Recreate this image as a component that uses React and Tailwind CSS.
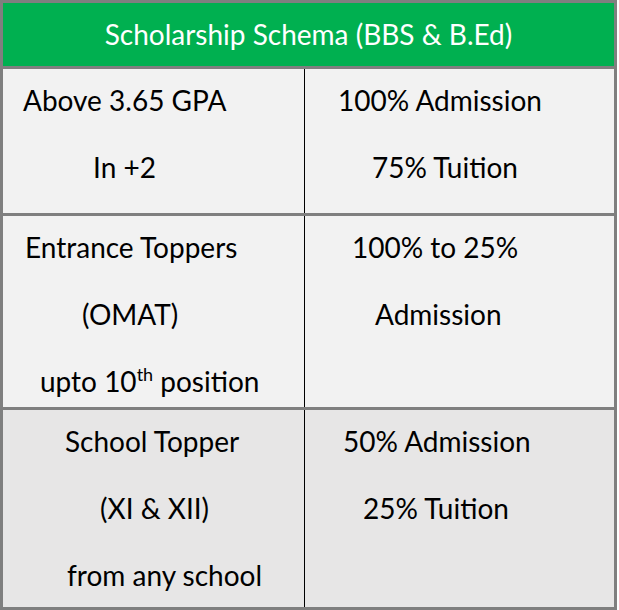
import React from 'react';

const rows = [
    {
        bg: 'bg-[#f2f2f2]',
        height: 'h-[144px]',
        left: [
            { text: 'Above 3.65 GPA', indent: 'ml-[20px]' },
            { text: 'In +2', indent: 'ml-[90px]' },
        ],
        right: [
            { text: '100% Admission', indent: 'ml-[33px]' },
            { text: '75% Tuition', indent: 'ml-[67px]' },
        ],
    },
    {
        bg: 'bg-[#f2f2f2]',
        height: 'h-[191px]',
        left: [
            { text: 'Entrance Toppers', indent: 'ml-[22px]' },
            { text: '(OMAT)', indent: 'ml-[79px]' },
            { text: 'upto 10', sup: 'th', after: ' position', indent: 'ml-[37px]' },
        ],
        right: [
            { text: '100% to 25%', indent: 'ml-[47px]' },
            { text: 'Admission', indent: 'ml-[70px]' },
        ],
    },
    {
        bg: 'bg-[#e7e6e6]',
        height: 'h-[197px]',
        left: [
            { text: 'School Topper', indent: 'ml-[62px]' },
            { text: '(XI & XII)', indent: 'ml-[97px]' },
            { text: 'from any school', indent: 'ml-[64px]' },
        ],
        right: [
            { text: '50% Admission', indent: 'ml-[38px]' },
            { text: '25% Tuition', indent: 'ml-[58px]' },
        ],
    },
];

const CellLines = ({ lines }) => (
    <div className="flex flex-col gap-[35px] pt-[15px]">
        {lines.map((line) => (
            <div key={line.text} className={`${line.indent} leading-[32px] whitespace-pre`}>
                {line.text}
                {line.sup && <span className="text-[18px] leading-none relative -top-[11px]">{line.sup}</span>}
                {line.after}
            </div>
        ))}
    </div>
);

export default function App() {
    return (
        <div className="w-[619px] h-[610px] bg-white">
            <div
                className="w-[617px] border-[3px] border-[#7f7f7f] text-[28px] text-black"
                style={{ fontFamily: 'Lato, "Open Sans", sans-serif' }}
            >
                {/* Header */}
                <div className="h-[66px] bg-[#00b050] border-b-[3px] border-[#7f7f7f] flex justify-center pt-[14px]">
                    <span className="text-white text-[28px] leading-[35px]">Scholarship Schema (BBS &amp; B.Ed)</span>
                </div>

                {rows.map((row, i) => (
                    <div
                        key={i}
                        className={`flex ${row.bg} ${row.height} ${i < rows.length - 1 ? 'border-b-[3px] border-[#7f7f7f] box-content' : ''}`}
                    >
                        <div className="w-[302px] border-r border-black">
                            <CellLines lines={row.left} />
                        </div>
                        <div className="flex-1">
                            <CellLines lines={row.right} />
                        </div>
                    </div>
                ))}
            </div>
        </div>
    );
}
